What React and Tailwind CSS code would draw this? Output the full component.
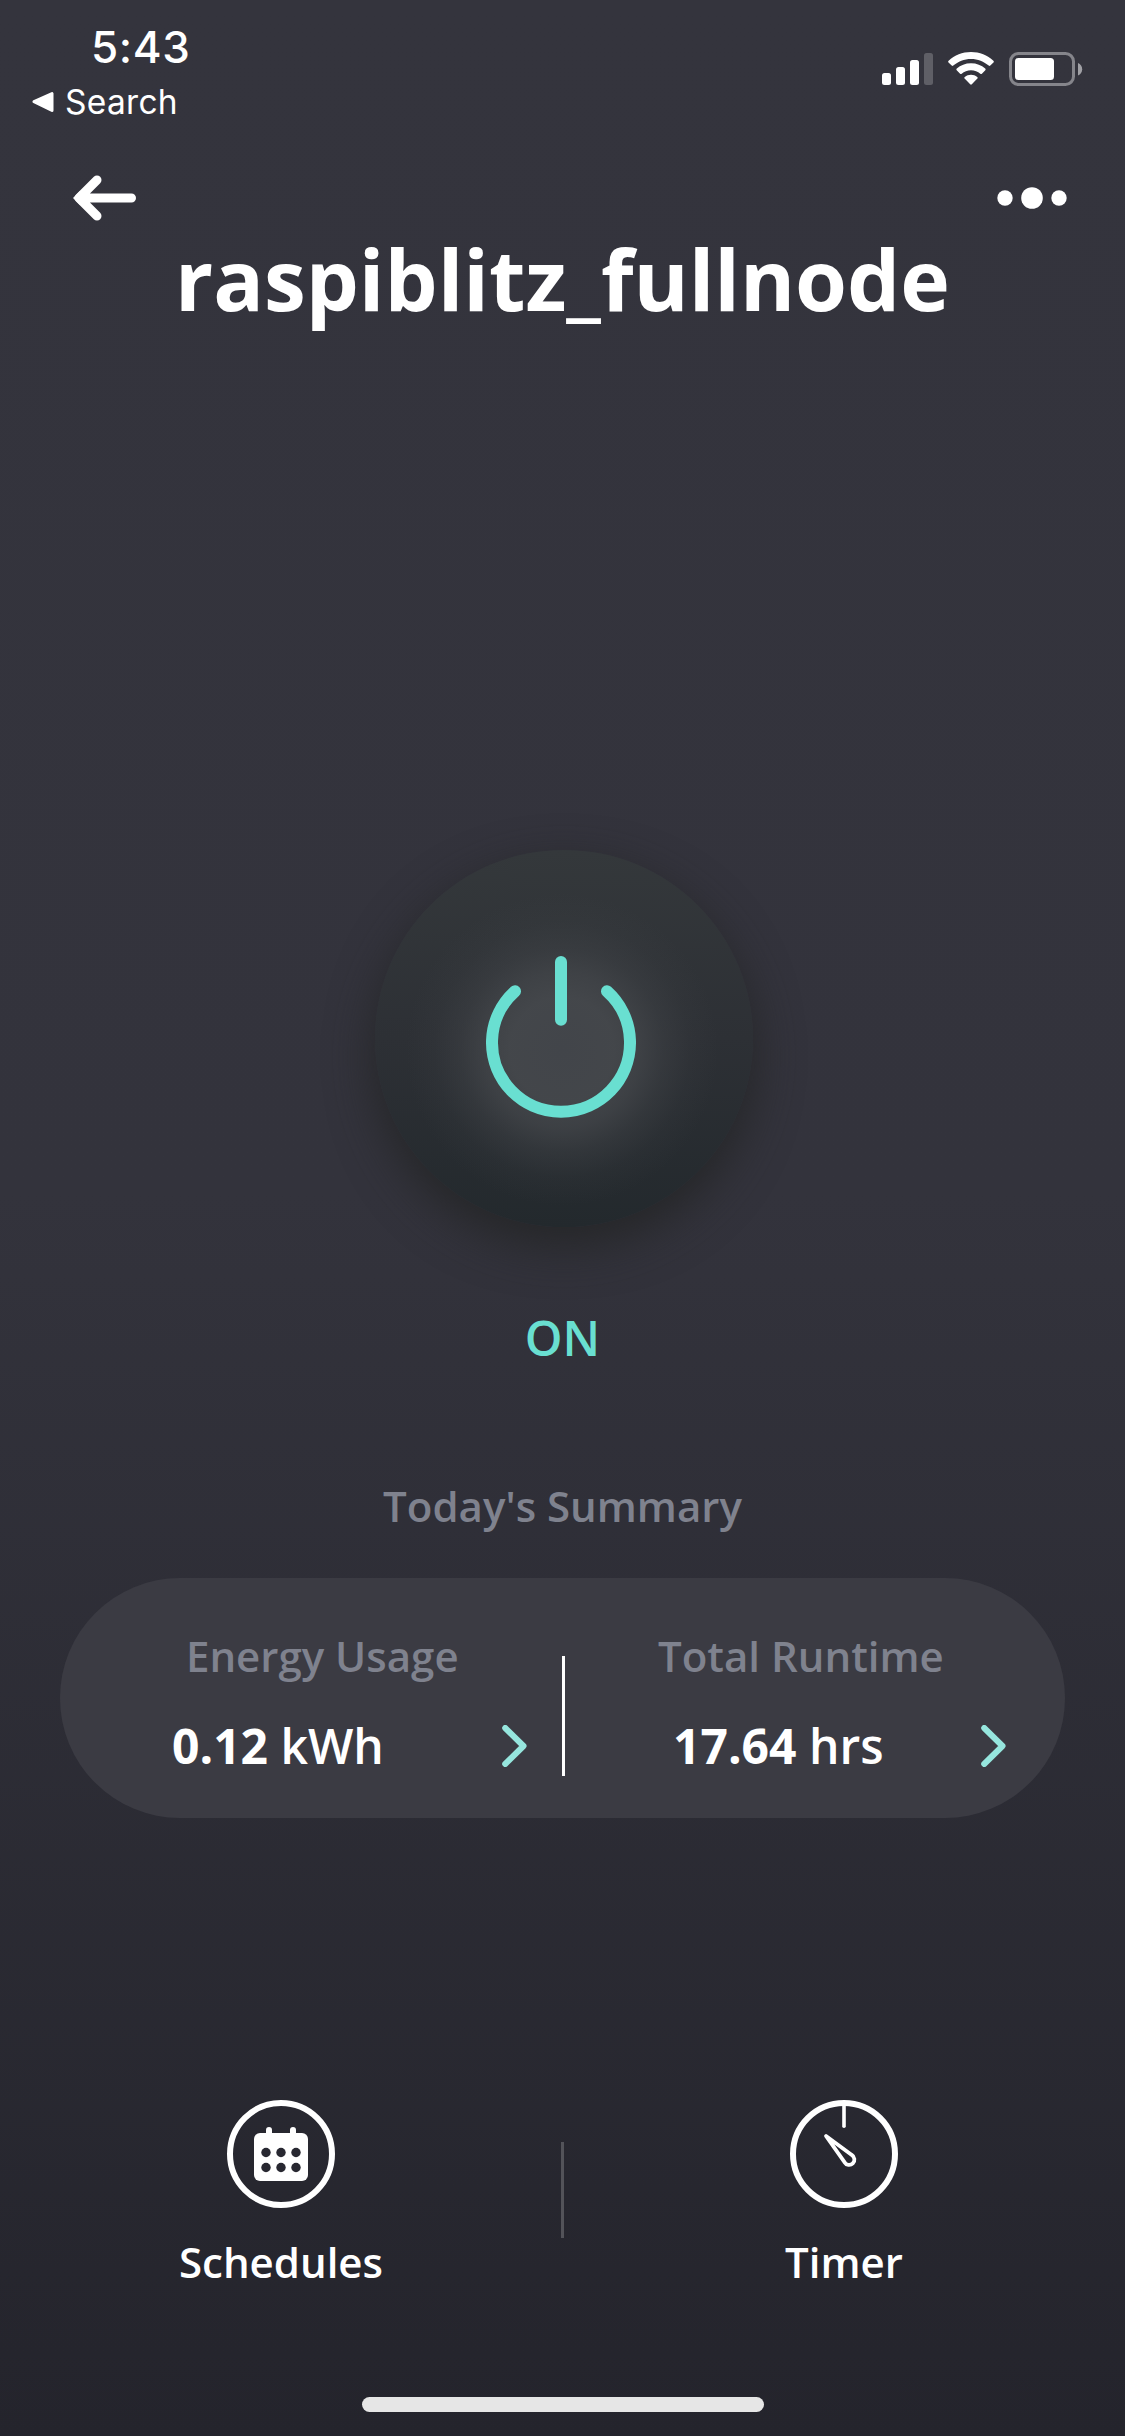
function SignalIcon() {
  return (
    <svg width="52" height="34" viewBox="0 0 52 34" className="text-white" fill="currentColor">
      <rect x="0" y="21" width="9" height="12" rx="2.5" />
      <rect x="14" y="15" width="9" height="18" rx="2.5" />
      <rect x="28" y="8" width="9" height="25" rx="2.5" />
      <rect x="42" y="1" width="9" height="32" rx="2.5" fill="#5f5f66" />
    </svg>
  );
}

function WifiIcon() {
  return (
    <svg width="46" height="34" viewBox="0 0 46 34" fill="#fff">
      <path d="M23 0C14.4 0 6.500 3.300.6 8.700c-.6.500-.6 1.200-.1 1.700l3.200 3.200c.4.500 1.100.5 1.600 0C10 9.400 16.200 6.900 23 6.900s13 2.500 17.700 6.700c.5.500 1.200.5 1.600 0l3.200-3.200c.5-.5.5-1.200-.1-1.700C39.500 3.300 31.600 0 23 0z" />
      <path d="M23 11.200c-5.500 0-10.500 2-14.200 5.400-.6.500-.6 1.200-.1 1.700l3.400 3.400c.4.400 1.100.4 1.600 0 2.500-2.200 5.700-3.500 9.300-3.500s6.800 1.300 9.300 3.500c.5.400 1.200.4 1.600 0l3.400-3.400c.5-.5.5-1.200-.1-1.700C33.500 13.200 28.500 11.200 23 11.200z" />
      <path d="M23 22.800c-2.300 0-4.500.8-6.200 2.100-.7.500-.7 1.200-.2 1.700l5.600 5.700c.5.500 1.100.5 1.600 0l5.600-5.700c.5-.5.5-1.200-.2-1.700-1.700-1.300-3.900-2.100-6.200-2.100z" />
    </svg>
  );
}

function BatteryIcon() {
  return (
    <svg width="74" height="34" viewBox="0 0 74 34" fill="none">
      <rect x="1.500" y="1.500" width="63" height="31" rx="8" stroke="#85858b" strokeWidth="3" />
      <rect x="6" y="6" width="39" height="22" rx="3.500" fill="#fff" />
      <path d="M69 11c2.600 1 4.200 3.300 4.200 6.200S71.600 22.400 69 23.400z" fill="#a0a0a5" />
    </svg>
  );
}

function Chevron() {
  return (
    <svg width="26" height="42" viewBox="0 0 26 42" fill="none" stroke="#96e6de" strokeWidth="6" strokeLinecap="round" strokeLinejoin="round">
      <path d="M3.200 3L21.500 21L3.200 39" />
    </svg>
  );
}

function PowerButton() {
  return (
    <button className="flex h-[377px] w-[378px] items-center justify-center rounded-full bg-[radial-gradient(circle_at_49.5%_53%,#42454a_0px,#45484cee_52px,#44474bbb_78px,#43464a66_102px,#43464a22_128px,#43464a00_156px),linear-gradient(#34383b,#2d3035_50%,#23292d)] shadow-[0_18px_45px_2px_#252627e6]">
      <svg width="150" height="168" viewBox="0 0 150 168" fill="none" stroke="#69dfd1" strokeWidth="12" strokeLinecap="round" className="mr-[5px] mb-2">
        <path d="M75 11V68.700" />
        <path d="M29 40.300A69 69 0 1 0 121 40.300" />
      </svg>
    </button>
  );
}

function ScheduleIcon() {
  return (
    <svg width="108" height="108" viewBox="0 0 108 108" fill="#fff">
      <circle cx="54" cy="54" r="51" fill="none" stroke="#fff" strokeWidth="6" />
      <path d="M42 30V38M66 30V38" stroke="#fff" strokeWidth="6" strokeLinecap="round" />
      <rect x="27" y="33" width="54" height="48" rx="6" />
      <g fill="#282831">
        <circle cx="39" cy="52.500" r="4.700" />
        <circle cx="54" cy="52.500" r="4.700" />
        <circle cx="69" cy="52.500" r="4.700" />
        <circle cx="39" cy="67.500" r="4.700" />
        <circle cx="54" cy="67.500" r="4.700" />
        <circle cx="69" cy="67.500" r="4.700" />
      </g>
    </svg>
  );
}

function TimerIcon() {
  return (
    <svg width="108" height="108" viewBox="0 0 108 108" fill="none" stroke="#fff" strokeLinecap="round" strokeLinejoin="round">
      <circle cx="54" cy="54" r="51" strokeWidth="6" />
      <path d="M54 4V26.200" strokeWidth="3.600" />
      <path d="M36 36L61.800 55A5.300 5.300 0 1 1 54.500 62.200Z" strokeWidth="3.800" />
    </svg>
  );
}

function Metric({ label, value, unit, className, labelClass, rowClass }) {
  return (
    <div className={`pt-12 ${className}`}>
      <div className={`text-[42px] leading-[60px] text-[#7f828e] ${labelClass}`}>{label}</div>
      <div className={`mt-[30px] flex items-center justify-between ${rowClass}`}>
        <div className="text-[48px] leading-[60px] text-white">
          <span className="font-bold">{value}</span> {unit}
        </div>
        <Chevron />
      </div>
    </div>
  );
}

function Action({ icon, label }) {
  return (
    <div className="flex w-[562px] flex-col items-center">
      {icon}
      <div className="mt-6 text-[42px] leading-[60px] text-white">{label}</div>
    </div>
  );
}

export default function App() {
  return (
    <div className="flex h-[2436px] w-[1125px] flex-col overflow-hidden bg-[linear-gradient(#34343d_0%,#33333c_49%,#24242c_100%)] font-['Open_Sans',sans-serif] font-semibold">
      <div className="flex h-[168px] items-start justify-between pr-[42px] pl-8 font-['Inter',sans-serif] text-white">
        <div className="pt-5">
          <div className="pl-[59px] text-[44px] leading-[54px] font-medium tracking-[0.6px]">5:43</div>
          <div className="mt-[7px] flex items-center">
            <svg width="22" height="22" viewBox="0 0 22 22" fill="#fff" stroke="#fff" strokeWidth="3" strokeLinejoin="round">
              <path d="M2 10.700L20 2.500V19.500Z" />
            </svg>
            <div className="pl-[11px] text-[33.5px] leading-[42px] font-normal tracking-[0.3px]">Search</div>
          </div>
        </div>
        <div className="flex pt-[52px]">
          <SignalIcon />
          <div className="w-[14px]" />
          <WifiIcon />
          <div className="w-[15px]" />
          <BatteryIcon />
        </div>
      </div>

      <div className="flex h-[60px] items-center justify-between pr-[57px] pl-[72px]">
        <svg width="64" height="46" viewBox="0 0 64 46" fill="none" stroke="#fff" strokeWidth="9" strokeLinecap="round" strokeLinejoin="round">
          <path d="M25 5L7 23L25 41M7 23H59.500" />
          <path d="M1 23L8 16V30Z" fill="#fff" stroke="none" />
        </svg>
        <svg width="72" height="24" viewBox="0 0 72 24" fill="#fff">
          <circle cx="9" cy="12" r="7.700" />
          <circle cx="36" cy="12" r="10.800" />
          <circle cx="63" cy="12" r="7.700" />
        </svg>
      </div>

      <h1 className="mt-px text-center text-[84px] leading-[100px] font-bold text-white">raspiblitz_fullnode</h1>

      <div className="mt-[521px] flex justify-center pl-0.5">
        <PowerButton />
      </div>
      <div className="mt-[81px] text-center text-[48px] leading-[60px] text-[#69dfd1]">ON</div>

      <div className="mt-[108px] text-center text-[42px] leading-[60px] text-[#7f828e]">Today's Summary</div>

      <div className="mx-[60px] mt-[42px] flex h-[240px] rounded-full bg-[#3b3b43]">
        <Metric label="Energy Usage" value="0.12" unit="kWh" className="w-[502px]" labelClass="pl-[126px]" rowClass="pl-[112px] pr-[34px]" />
        <div className="mt-[78px] h-[120px] w-[3px] bg-white" />
        <Metric label="Total Runtime" value="17.64" unit="hrs" className="w-[500px]" labelClass="pl-[93px]" rowClass="pl-[108px] pr-[58px]" />
      </div>

      <div className="mt-[282px] flex">
        <Action icon={<ScheduleIcon />} label="Schedules" />
        <div className="-mr-px -ml-px mt-[42px] h-24 w-[3px] bg-[#535359]" />
        <Action icon={<TimerIcon />} label="Timer" />
      </div>

      <div className="mt-[105px] ml-[362px] h-[15px] w-[402px] rounded-full bg-[#e6e6e6]" />
    </div>
  );
}
